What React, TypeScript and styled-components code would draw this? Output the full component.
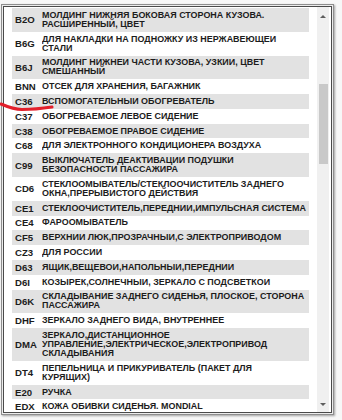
import React from 'react';
import styled, { createGlobalStyle } from 'styled-components';

const GlobalStyle = createGlobalStyle`
  html, body {
    margin: 0;
    padding: 0;
    background: #f7f7f7;
  }
  body {
    font-family: "Liberation Sans", Arial, sans-serif;
  }
`;

const Page = styled.div`
  position: relative;
  width: 342px;
  height: 420px;
  overflow: hidden;
  padding: 4px 0 0 1px;
  box-sizing: border-box;
`;

const Frame = styled.div`
  width: 333px;
  height: 411px;
  box-sizing: border-box;
  border: 1px solid #8e8e8e;
  padding: 1px;
  background: #ececec;
  box-shadow: 1px 1px 2px rgba(0, 0, 0, 0.35);
`;

const Inner = styled.div`
  height: 100%;
  box-sizing: border-box;
  border: 1px solid #4a4a4a;
  background: #ffffff;
  display: flex;
  align-items: stretch;
  padding: 0 2px 0 8px;
  gap: 8px;
  overflow: hidden;
`;

const List = styled.div`
  width: 297px;
  flex: none;
  padding-top: 1px;
  display: flex;
  flex-direction: column;
  overflow: hidden;
`;

const Row = styled.div<{ $shade: boolean }>`
  display: grid;
  grid-template-columns: 30px 1fr;
  align-items: center;
  padding: 2.9px 0;
  background: ${(p) => (p.$shade ? '#e2e2e2' : '#ffffff')};
  color: #1c1c1c;
  font-weight: bold;
  font-size: 8.95px;
  line-height: 9px;
  flex: none;
`;

const Code = styled.div`
  padding-left: 3px;
  font-size: 9.6px;
  white-space: nowrap;
`;

const Text = styled.div`
  white-space: pre;
  overflow: hidden;
`;

const Scrollbar = styled.div`
  width: 12px;
  flex: none;
  background: #f0f0f0;
  display: flex;
  flex-direction: column;
  align-items: center;
  padding-top: 8px;
  padding-bottom: 6px;
  box-sizing: border-box;
`;

const Arrow = styled.div<{ $down?: boolean }>`
  width: 0;
  height: 0;
  border-left: 3px solid transparent;
  border-right: 3px solid transparent;
  ${(p) =>
    p.$down
      ? 'border-top: 3px solid #5e5e5e;'
      : 'border-bottom: 3px solid #5e5e5e;'}
  flex: none;
`;

const Track = styled.div`
  flex: 1;
  align-self: stretch;
  display: flex;
  justify-content: center;
`;

const Thumb = styled.div`
  margin-top: 66px;
  width: 9px;
  height: 80px;
  background: #c9c9c9;
`;

const Mark = styled.svg`
  position: absolute;
  left: 0;
  top: 98px;
  pointer-events: none;
`;

const rows: { code: string; text: string }[] = [
  { code: 'B2O', text: 'МОЛДИНГ НИЖНЯЯ БОКОВАЯ СТОРОНА КУЗОВА.\nРАСШИРЕННЫЙ, ЦВЕТ' },
  { code: 'B6G', text: 'ДЛЯ НАКЛАДКИ НА ПОДНОЖКУ ИЗ НЕРЖАВЕЮЩЕЙ\nСТАЛИ' },
  { code: 'B6J', text: 'МОЛДИНГ НИЖНЕЙ ЧАСТИ КУЗОВА, УЗКИЙ, ЦВЕТ\nСМЕШАННЫЙ' },
  { code: 'BNN', text: 'ОТСЕК ДЛЯ ХРАНЕНИЯ, БАГАЖНИК' },
  { code: 'C36', text: 'ВСПОМОГАТЕЛЬНЫЙ ОБОГРЕВАТЕЛЬ' },
  { code: 'C37', text: 'ОБОГРЕВАЕМОЕ ЛЕВОЕ СИДЕНИЕ' },
  { code: 'C38', text: 'ОБОГРЕВАЕМОЕ ПРАВОЕ СИДЕНИЕ' },
  { code: 'C68', text: 'ДЛЯ ЭЛЕКТРОННОГО КОНДИЦИОНЕРА ВОЗДУХА' },
  { code: 'C99', text: 'ВЫКЛЮЧАТЕЛЬ ДЕАКТИВАЦИИ ПОДУШКИ\nБЕЗОПАСНОСТИ ПАССАЖИРА' },
  { code: 'CD6', text: 'СТЕКЛООМЫВАТЕЛЬ/СТЕКЛООЧИСТИТЕЛЬ ЗАДНЕГО\nОКНА,ПРЕРЫВИСТОГО ДЕЙСТВИЯ' },
  { code: 'CE1', text: 'СТЕКЛООЧИСТИТЕЛЬ,ПЕРЕДНИЙ,ИМПУЛЬСНАЯ СИСТЕМА' },
  { code: 'CE4', text: 'ФАРООМЫВАТЕЛЬ' },
  { code: 'CF5', text: 'ВЕРХНИЙ ЛЮК,ПРОЗРАЧНЫЙ,С ЭЛЕКТРОПРИВОДОМ' },
  { code: 'CZ3', text: 'ДЛЯ РОССИИ' },
  { code: 'D63', text: 'ЯЩИК,ВЕЩЕВОЙ,НАПОЛЬНЫЙ,ПЕРЕДНИЙ' },
  { code: 'D6I', text: 'КОЗЫРЕК,СОЛНЕЧНЫЙ, ЗЕРКАЛО С ПОДСВЕТКОЙ' },
  { code: 'D6K', text: 'СКЛАДЫВАНИЕ ЗАДНЕГО СИДЕНЬЯ, ПЛОСКОЕ, СТОРОНА\nПАССАЖИРА' },
  { code: 'DHF', text: 'ЗЕРКАЛО ЗАДНЕГО ВИДА, ВНУТРЕННЕЕ' },
  { code: 'DMA', text: 'ЗЕРКАЛО,ДИСТАНЦИОННОЕ\nУПРАВЛЕНИЕ,ЭЛЕКТРИЧЕСКОЕ,ЭЛЕКТРОПРИВОД\nСКЛАДЫВАНИЯ' },
  { code: 'DT4', text: 'ПЕПЕЛЬНИЦА И ПРИКУРИВАТЕЛЬ (ПАКЕТ ДЛЯ\nКУРЯЩИХ)' },
  { code: 'E20', text: 'РУЧКА' },
  { code: 'EDX', text: 'КОЖА ОБИВКИ СИДЕНЬЯ. MONDIAL' },
];

export default function App() {
  return (
    <Page>
      <GlobalStyle />
      <Frame>
        <Inner>
          <List>
            {rows.map((r, i) => (
              <Row key={r.code} $shade={i % 2 === 0}>
                <Code>{r.code}</Code>
                <Text>{r.text}</Text>
              </Row>
            ))}
          </List>
          <Scrollbar>
            <Arrow />
            <Track>
              <Thumb />
            </Track>
            <Arrow $down />
          </Scrollbar>
        </Inner>
      </Frame>
      <Mark width="60" height="16" viewBox="0 98 60 16">
        <path
          d="M1 104 C 8 107, 14 109.5, 22 109.5 C 32 109.5, 42 108.5, 52 107"
          stroke="#e3202b"
          strokeWidth="3"
          fill="none"
          strokeLinecap="round"
        />
      </Mark>
    </Page>
  );
}
